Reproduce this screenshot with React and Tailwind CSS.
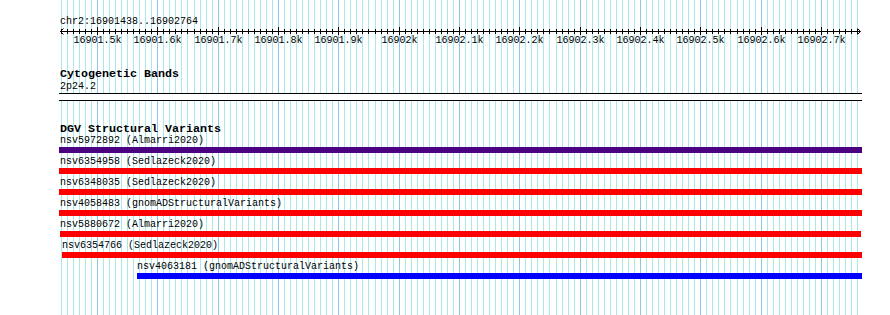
import React from 'react';

// position in px of a base pair on the 890px wide browser image
const X = (bp) => Math.round(97 + (bp - 16901500) * 0.60333);

const ticks = [];
for (let bp = 16901440; bp <= 16902760; bp += 10) ticks.push(bp);

const majors = ticks.filter((bp) => bp % 100 === 0);

const labelFor = (bp) => {
  const k = bp / 1000;
  return Number.isInteger(k) ? `${k}k` : `${k.toFixed(1)}k`;
};

const variants = [
  { name: 'nsv5972892 (Almarri2020)', color: 'bg-[#4b0082]', bar: 'ml-[59px] w-[803px]', label: 'ml-[60px]' },
  { name: 'nsv6354958 (Sedlazeck2020)', color: 'bg-[#ff0000]', bar: 'ml-[59px] w-[803px]', label: 'ml-[60px]' },
  { name: 'nsv6348035 (Sedlazeck2020)', color: 'bg-[#ff0000]', bar: 'ml-[59px] w-[803px]', label: 'ml-[60px]' },
  { name: 'nsv4058483 (gnomADStructuralVariants)', color: 'bg-[#ff0000]', bar: 'ml-[59px] w-[803px]', label: 'ml-[60px]' },
  { name: 'nsv5880672 (Almarri2020)', color: 'bg-[#ff0000]', bar: 'ml-[60px] w-[801px]', label: 'ml-[60px]' },
  { name: 'nsv6354766 (Sedlazeck2020)', color: 'bg-[#ff0000]', bar: 'ml-[62px] w-[800px]', label: 'ml-[62px]' },
  { name: 'nsv4063181 (gnomADStructuralVariants)', color: 'bg-[#0000ff]', bar: 'ml-[137px] w-[725px]', label: 'ml-[137px]' },
];

function Grid() {
  return (
    <svg className="absolute left-0 top-0" width="890" height="315">
      {ticks.map((bp) => (
        <line
          key={bp}
          x1={X(bp) + 0.5}
          x2={X(bp) + 0.5}
          y1="0"
          y2="315"
          stroke={bp % 100 === 0 ? '#8ec6ea' : '#aae8ec'}
          strokeWidth="1"
        />
      ))}
    </svg>
  );
}

function Ruler() {
  return (
    <svg width="890" height="20" className="block">
      {/* axis, y=4 here is y=31 on the page */}
      <line x1="60" x2="860" y1="4.5" y2="4.5" stroke="#000" />
      <polyline points="63.5,1.5 60.5,4.5 63.5,7.5" fill="none" stroke="#000" />
      <polyline points="857.5,1.5 860.5,4.5 857.5,7.5" fill="none" stroke="#000" />
      {ticks.map((bp) => {
        const major = bp % 100 === 0;
        return (
          <line
            key={bp}
            x1={X(bp) + 0.5}
            x2={X(bp) + 0.5}
            y1={major ? 0 : 2}
            y2={major ? 8 : 7}
            stroke="#000"
          />
        );
      })}
      {majors.map((bp) => (
        <text
          key={bp}
          x={X(bp) + 0.5}
          y="16"
          textAnchor="middle"
          fontFamily="'Liberation Mono', monospace"
          fontSize="10"
          fill="#000"
        >
          {labelFor(bp)}
        </text>
      ))}
    </svg>
  );
}

export default function App() {
  return (
    <div className="relative w-[890px] h-[315px] overflow-hidden bg-white text-black font-['Liberation_Mono',monospace]">
      <Grid />
      <div className="relative flex flex-col">
        {/* position header */}
        <div className="mt-[17px] ml-[60px] h-[10px] text-[10px] leading-[10px]">chr2:16901438..16902764</div>
        <Ruler />

        {/* cytogenetic bands */}
        <div className="mt-[21px] ml-[60px] h-[12px] text-[11.67px] leading-[12px] font-bold">Cytogenetic Bands</div>
        <div className="mt-[2px] ml-[60px] h-[10px] text-[10px] leading-[10px]">2p24.2</div>
        <div className="mt-[1px] ml-[59px] w-[803px] h-px bg-black" />
        <div className="ml-[59px] w-[803px] h-[6px] bg-white" />
        <div className="ml-[59px] w-[803px] h-px bg-black" />

        {/* DGV track */}
        <div className="mt-[22px] ml-[60px] h-[12px] text-[11.67px] leading-[12px] font-bold">DGV Structural Variants</div>
        <div className="mt-[1px] flex flex-col gap-[4px]">
          {variants.map((v) => (
            <div key={v.name} className="flex flex-col">
              <div className={`${v.label} h-[11px] text-[10px] leading-[10px] whitespace-nowrap`}>{v.name}</div>
              <div className={`${v.bar} ${v.color} h-[6px]`} />
            </div>
          ))}
        </div>
      </div>
    </div>
  );
}
